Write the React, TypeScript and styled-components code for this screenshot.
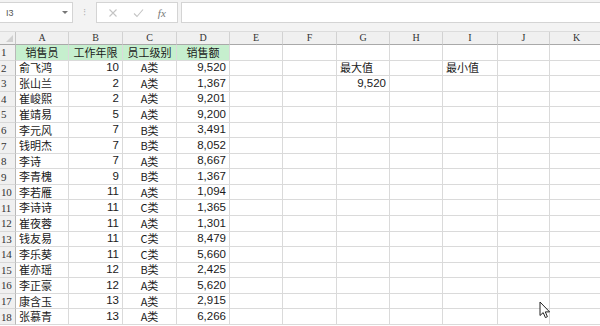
import React from 'react'
import styled, { createGlobalStyle } from 'styled-components'

const GlobalStyle = createGlobalStyle`
  html, body {
    margin: 0;
    padding: 0;
    background: #ffffff;
    overflow: hidden;
  }
  * { box-sizing: border-box; }
`

const cols = [16, 53, 54, 54, 53, 53, 54, 53, 53, 55, 52, 54]
const letters = ['A', 'B', 'C', 'D', 'E', 'F', 'G', 'H', 'I', 'J', 'K']

type Row = [string, string, string, string]

const rows: Row[] = [
  ['俞飞鸿', '10', 'A类', '9,520'],
  ['张山兰', '2', 'A类', '1,367'],
  ['崔峻熙', '2', 'A类', '9,201'],
  ['崔靖易', '5', 'A类', '9,200'],
  ['李元风', '7', 'B类', '3,491'],
  ['钱明杰', '7', 'B类', '8,052'],
  ['李诗', '7', 'A类', '8,667'],
  ['李青槐', '9', 'B类', '1,367'],
  ['李若雁', '11', 'A类', '1,094'],
  ['李诗诗', '11', 'C类', '1,365'],
  ['崔夜蓉', '11', 'A类', '1,301'],
  ['钱友易', '11', 'C类', '8,479'],
  ['李乐葵', '11', 'C类', '5,660'],
  ['崔亦瑶', '12', 'B类', '2,425'],
  ['李正豪', '12', 'A类', '5,620'],
  ['康含玉', '13', 'A类', '2,915'],
  ['张慕青', '13', 'A类', '6,266'],
]

const Window = styled.div`
  position: relative;
  width: 600px;
  height: 326px;
  overflow: hidden;
  background: #ffffff;
  display: flex;
  flex-direction: column;
`

const Toolbar = styled.div`
  height: 32px;
  flex: none;
  background: #f3f3f3;
  display: flex;
  align-items: flex-start;
  padding-top: 2px;
  border-bottom: 1px solid #dcdcdc;
`

const NameBox = styled.div`
  width: 73px;
  height: 21px;
  background: #ffffff;
  border: 1px solid #d4d4d4;
  border-left: none;
  display: flex;
  align-items: center;
  justify-content: space-between;
  padding: 0 4px 0 6px;
  font-family: 'Liberation Sans', Arial, sans-serif;
  font-size: 9px;
  color: #555;
`

const Caret = styled.span`
  width: 0;
  height: 0;
  border-left: 3px solid transparent;
  border-right: 3px solid transparent;
  border-top: 3px solid #777;
`

const Grip = styled.div`
  width: 23px;
  height: 21px;
  display: flex;
  align-items: center;
  justify-content: center;
  font-family: 'DejaVu Sans', sans-serif;
  font-size: 10px;
  color: #b5b5b5;
`

const FxBox = styled.div`
  width: 82px;
  height: 21px;
  background: #ffffff;
  border: 1px solid #d4d4d4;
  display: flex;
  align-items: center;
  justify-content: space-around;
  padding: 0 4px;
  color: #b9b9b9;
`

const FxLabel = styled.span`
  font-family: 'Liberation Serif', 'Times New Roman', serif;
  font-style: italic;
  font-size: 11px;
  color: #777;
`

const Formula = styled.div`
  flex: 1;
  height: 21px;
  margin-left: 3px;
  background: #ffffff;
  border: 1px solid #d4d4d4;
  border-right: none;
`

const Sheet = styled.div`
  display: grid;
  grid-template-columns: ${cols.map((c) => `${c}px`).join(' ')};
  grid-template-rows: 13px repeat(18, 15.55px);
  width: ${cols.reduce((a, b) => a + b, 0)}px;
`

const Corner = styled.div`
  position: relative;
  background: #f0f0f0;
  border-right: 1px solid #c6c6c6;
  border-bottom: 1px solid #a9a9a9;
  &::after {
    content: '';
    position: absolute;
    right: 2px;
    bottom: 2px;
    border-left: 7px solid transparent;
    border-bottom: 7px solid #d0d0d0;
  }
`

const ColHead = styled.div`
  background: #f0f0f0;
  border-right: 1px solid #d2d2d2;
  border-bottom: 1px solid #a9a9a9;
  display: flex;
  align-items: center;
  justify-content: center;
  font-family: 'Liberation Serif', 'Times New Roman', serif;
  font-size: 10px;
  color: #333;
  line-height: 1;
`

const RowHead = styled.div`
  background: #f0f0f0;
  border-right: 1px solid #b8b8b8;
  border-bottom: 1px solid #d8d8d8;
  display: flex;
  align-items: center;
  padding-left: 1px;
  font-family: 'Liberation Serif', 'Times New Roman', serif;
  font-size: 11px;
  color: #333;
  overflow: hidden;
  white-space: nowrap;
  letter-spacing: -0.3px;
`

const Cell = styled.div<{ $align?: 'left' | 'center' | 'right'; $fill?: boolean; $num?: boolean }>`
  background: ${(p) => (p.$fill ? '#c6efce' : '#ffffff')};
  border-right: 1px solid #dadada;
  border-bottom: 1px solid #dadada;
  display: flex;
  align-items: center;
  justify-content: ${(p) =>
    p.$align === 'right' ? 'flex-end' : p.$align === 'center' ? 'center' : 'flex-start'};
  padding: 0 3px;
  font-family: ${(p) =>
    p.$num
      ? "'Liberation Sans', Arial, 'Noto Sans CJK SC', sans-serif"
      : "'Noto Sans CJK SC', 'Liberation Sans', sans-serif"};
  font-size: ${(p) => (p.$num ? '11.5px' : '11px')};
  color: #1a1a1a;
  white-space: nowrap;
  overflow: visible;
  line-height: 1;
`

const Pointer = styled.svg`
  position: absolute;
  left: 539px;
  top: 301px;
`

function App() {
  const extra = (r: number, c: number): React.ReactNode => {
    if (r === 1 && c === 6) return <Cell key={c}>最大值</Cell>
    if (r === 1 && c === 8) return <Cell key={c}>最小值</Cell>
    if (r === 2 && c === 6) return <Cell key={c} $align="right" $num>9,520</Cell>
    return <Cell key={c} />
  }

  return (
    <Window>
      <GlobalStyle />
      <Toolbar>
        <NameBox>
          <span>I3</span>
          <Caret />
        </NameBox>
        <Grip>⁝</Grip>
        <FxBox>
          <svg width="10" height="10" viewBox="0 0 10 10">
            <path d="M1.5 1.5 L8.5 8.5 M8.5 1.5 L1.5 8.5" stroke="#c4c4c4" strokeWidth="1.1" fill="none" />
          </svg>
          <svg width="11" height="10" viewBox="0 0 11 10">
            <path d="M1 5.5 L4 8.5 L10 1.5" stroke="#c4c4c4" strokeWidth="1.1" fill="none" />
          </svg>
          <FxLabel>fx</FxLabel>
        </FxBox>
        <Formula />
      </Toolbar>
      <Sheet>
        <Corner />
        {letters.map((l) => (
          <ColHead key={l}>{l}</ColHead>
        ))}
        <RowHead>1</RowHead>
        <Cell $fill $align="center">销售员</Cell>
        <Cell $fill $align="center">工作年限</Cell>
        <Cell $fill $align="center">员工级别</Cell>
        <Cell $fill $align="center">销售额</Cell>
        {letters.slice(4).map((l, i) => extra(0, i + 4))}
        {rows.map((row, r) => (
          <React.Fragment key={r}>
            <RowHead>{r + 2}</RowHead>
            <Cell>{row[0]}</Cell>
            <Cell $align="right" $num>{row[1]}</Cell>
            <Cell $align="center">{row[2]}</Cell>
            <Cell $align="right" $num>{row[3]}</Cell>
            {letters.slice(4).map((l, i) => extra(r + 1, i + 4))}
          </React.Fragment>
        ))}
      </Sheet>
      <Pointer width="12" height="18" viewBox="0 0 12 18">
        <path
          d="M1 1 L1 14.5 L4.2 11.6 L6.4 16.6 L8.4 15.7 L6.3 10.9 L10.6 10.9 Z"
          fill="#ffffff"
          stroke="#222"
          strokeWidth="1"
          strokeLinejoin="round"
        />
      </Pointer>
    </Window>
  )
}

export default App
